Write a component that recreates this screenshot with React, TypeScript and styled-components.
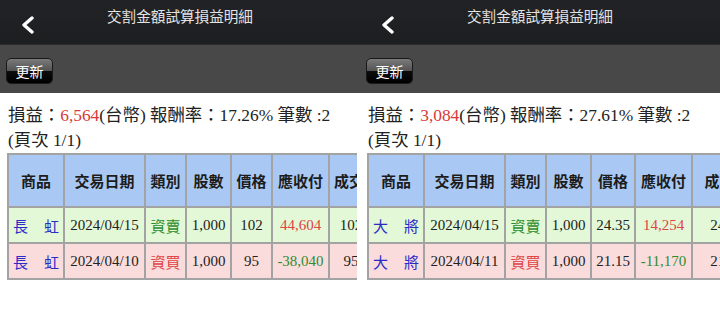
import React from 'react';
import styled, { createGlobalStyle } from 'styled-components';

const GlobalStyle = createGlobalStyle`
  html, body {
    margin: 0;
    padding: 0;
    background: #fff;
  }
  body {
    font-family: "Liberation Serif", "Noto Sans CJK TC", serif;
    color: #222;
  }
`;

const Page = styled.div`
  display: flex;
  width: 720px;
`;

const Panel = styled.section`
  width: 360px;
  flex: none;
  overflow: hidden;
  background: #fff;
`;

const NavBar = styled.header`
  height: 44px;
  display: flex;
  background: linear-gradient(#222326, #1d1e20);
`;

const BackButton = styled.div`
  width: 60px;
  flex: none;
  display: flex;
  align-items: flex-end;
  padding: 0 0 10px 20px;
  box-sizing: border-box;
`;

const Title = styled.h1`
  flex: 1;
  margin: 0 60px 0 0;
  padding-top: 5px;
  font: 400 14.6px/21px "Noto Sans CJK TC", sans-serif;
  color: #e4e4e4;
  text-align: center;
  white-space: nowrap;
`;

const ToolBar = styled.div`
  height: 49px;
  box-sizing: border-box;
  padding: 13px 6px 0;
  background: #484848;
  border-top: 1px solid #2c2c2c;
`;

const RefreshButton = styled.button`
  height: 26px;
  width: 47px;
  padding: 0;
  border: 1px solid #1a1a1a;
  border-radius: 5px;
  background: linear-gradient(#7a7a7a 0%, #555 48%, #0c0c0c 52%, #000 100%);
  color: #fff;
  font: 400 14px/24px "Noto Sans CJK TC", sans-serif;
  cursor: pointer;
`;

const Content = styled.div`
  padding: 10px 0 0 8px;
`;

const Summary = styled.div`
  font-size: 17.4px;
  line-height: 25px;
  white-space: nowrap;
`;

const Profit = styled.span`
  color: #d83a3a;
`;

const TableWrap = styled.div<{ $clip: number }>`
  margin: 0 ${({ $clip }) => $clip}px 0 -1px;
  overflow: hidden;
`;

const Table = styled.table<{ $width: number }>`
  width: ${({ $width }) => $width}px;
  table-layout: fixed;
  border-collapse: separate;
  border-spacing: 0;
  border-top: 2px solid #a3a3a3;
  border-left: 2px solid #a3a3a3;
`;

const HeadRow = styled.tr`
  height: 53px;
  background: #a9c9f4;
`;

const HeadCell = styled.th<{ $w: number }>`
  width: ${({ $w }) => $w}px;
  box-sizing: border-box;
  padding: 0 4px;
  border-right: 2px solid #a3a3a3;
  border-bottom: 2px solid #a3a3a3;
  font: 700 15px/20px "Noto Sans CJK TC", sans-serif;
  color: #1c1c1c;
  text-align: center;
  white-space: nowrap;
  overflow: hidden;
`;

const Row = styled.tr<{ $side: 'sell' | 'buy' }>`
  height: 36px;
  background: ${({ $side }) => ($side === 'sell' ? '#e3f8d6' : '#fadcdc')};
`;

const Cell = styled.td<{ $tone?: 'red' | 'green' }>`
  box-sizing: border-box;
  padding: 0 4px;
  border-right: 2px solid #a3a3a3;
  border-bottom: 2px solid #a3a3a3;
  font-size: 15px;
  text-align: center;
  white-space: nowrap;
  overflow: hidden;
  color: ${({ $tone }) => ($tone === 'red' ? '#e04444' : $tone === 'green' ? '#2f8d2f' : '#222')};
`;

const Name = styled.span`
  display: flex;
  justify-content: space-between;
  color: #2b2bc8;
  font-family: "Noto Sans CJK TC", sans-serif;
`;

const Side = styled.span`
  font-family: "Noto Sans CJK TC", sans-serif;
`;

type Trade = {
  name: [string, string];
  date: string;
  side: 'sell' | 'buy';
  qty: string;
  price: string;
  amount: string;
  deal: string;
};

type Report = {
  profit: string;
  rate: string;
  count: number;
  widths: number[];
  clip: number;
  trades: Trade[];
};

const headers = ['商品', '交易日期', '類別', '股數', '價格', '應收付', '成交價'];

const reports: Report[] = [
  {
    profit: '6,564',
    rate: '17.26%',
    count: 2,
    widths: [56, 81, 41, 45, 41, 57, 44],
    clip: 3,
    trades: [
      { name: ['長', '虹'], date: '2024/04/15', side: 'sell', qty: '1,000', price: '102', amount: '44,604', deal: '102' },
      { name: ['長', '虹'], date: '2024/04/10', side: 'buy', qty: '1,000', price: '95', amount: '-38,040', deal: '95' },
    ],
  },
  {
    profit: '3,084',
    rate: '27.61%',
    count: 2,
    widths: [56, 81, 41, 45, 44, 57, 70],
    clip: 0,
    trades: [
      { name: ['大', '將'], date: '2024/04/15', side: 'sell', qty: '1,000', price: '24.35', amount: '14,254', deal: '24.35' },
      { name: ['大', '將'], date: '2024/04/11', side: 'buy', qty: '1,000', price: '21.15', amount: '-11,170', deal: '21.15' },
    ],
  },
];

function BackIcon() {
  return (
    <svg width="16" height="18" viewBox="0 0 16 18">
      <polyline points="12,2 4,9 12,16" fill="none" stroke="#fff" strokeWidth="3.4" strokeLinecap="round" strokeLinejoin="round" />
    </svg>
  );
}

function ReportPanel({ report }: { report: Report }) {
  const tableWidth = 2 + report.widths.reduce((a, b) => a + b, 0);

  return (
    <Panel>
      <NavBar>
        <BackButton>
          <BackIcon />
        </BackButton>
        <Title>交割金額試算損益明細</Title>
      </NavBar>
      <ToolBar>
        <RefreshButton>更新</RefreshButton>
      </ToolBar>
      <Content>
        <Summary>
          損益：<Profit>{report.profit}</Profit>(台幣) 報酬率：{report.rate} 筆數 :{report.count}
        </Summary>
        <Summary>(頁次 1/1)</Summary>
        <TableWrap $clip={report.clip}>
          <Table $width={tableWidth}>
            <thead>
              <HeadRow>
                {headers.map((h, i) => (
                  <HeadCell key={h} $w={report.widths[i]}>
                    {h}
                  </HeadCell>
                ))}
              </HeadRow>
            </thead>
            <tbody>
              {report.trades.map((t) => (
                <Row key={t.date} $side={t.side}>
                  <Cell>
                    <Name>
                      <span>{t.name[0]}</span>
                      <span>{t.name[1]}</span>
                    </Name>
                  </Cell>
                  <Cell>{t.date}</Cell>
                  <Cell $tone={t.side === 'sell' ? 'green' : 'red'}>
                    <Side>{t.side === 'sell' ? '資賣' : '資買'}</Side>
                  </Cell>
                  <Cell>{t.qty}</Cell>
                  <Cell>{t.price}</Cell>
                  <Cell $tone={t.amount.startsWith('-') ? 'green' : 'red'}>{t.amount}</Cell>
                  <Cell>{t.deal}</Cell>
                </Row>
              ))}
            </tbody>
          </Table>
        </TableWrap>
      </Content>
    </Panel>
  );
}

export default function App() {
  return (
    <>
      <GlobalStyle />
      <Page>
        {reports.map((r) => (
          <ReportPanel key={r.profit} report={r} />
        ))}
      </Page>
    </>
  );
}
